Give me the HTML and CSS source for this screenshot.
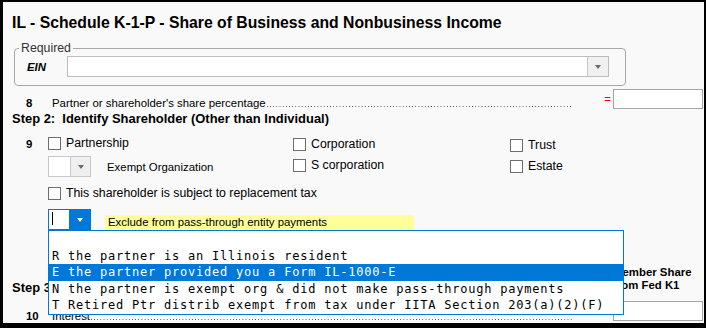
FILE: index.html
```html
<!DOCTYPE html>
<html lang="en">
<head>
<meta charset="utf-8">
<title>IL - Schedule K-1-P</title>
<link rel="stylesheet" href="styles.css">
</head>
<body>
<div class="page">
  <h1 class="title">IL - Schedule K-1-P - Share of Business and Nonbusiness Income</h1>

  <fieldset class="req">
    <legend>Required</legend>
    <div class="ein-row">
      <span class="ein-label">EIN</span>
      <div class="select">
        <span class="select-value"></span>
        <span class="select-btn"><span class="caret"></span></span>
      </div>
    </div>
  </fieldset>

  <div class="line-row row8">
    <span class="num">8</span>
    <span class="leader"><span class="leader-text">Partner or shareholder's share percentage</span><span class="dots"></span></span>
    <span class="eq">=</span>
    <span class="amount"></span>
  </div>

  <h2 class="step">Step 2:&nbsp; Identify Shareholder (Other than Individual)</h2>

  <div class="row9">
    <span class="num num9">9</span>
    <div class="col col1">
      <label class="check"><span class="box"></span><span>Partnership</span></label>
      <div class="combo-row exempt">
        <div class="combo">
          <span class="combo-field"></span>
          <span class="combo-btn"><span class="caret"></span></span>
        </div>
        <span class="combo-label">Exempt Organization</span>
      </div>
    </div>
    <div class="col col2">
      <label class="check"><span class="box"></span><span>Corporation</span></label>
      <label class="check second"><span class="box"></span><span>S corporation</span></label>
    </div>
    <div class="col col3">
      <label class="check"><span class="box"></span><span>Trust</span></label>
      <label class="check second"><span class="box"></span><span>Estate</span></label>
    </div>
  </div>

  <label class="check repl"><span class="box"></span><span>This shareholder is subject to replacement tax</span></label>

  <div class="combo-row active-row">
    <div class="combo active">
      <span class="combo-field"><span class="cursor"></span></span>
      <span class="combo-btn"><span class="caret"></span></span>
      <ul class="menu">
        <li></li>
        <li>R the partner is an Illinois resident</li>
        <li class="sel">E the partner provided you a Form IL-1000-E</li>
        <li>N the partner is exempt org &amp; did not make pass-through payments</li>
        <li>T Retired Ptr distrib exempt from tax under IITA Section 203(a)(2)(F)</li>
      </ul>
    </div>
    <span class="hl">Exclude from pass-through entity payments</span>
  </div>

  <div class="step3-row">
    <h2 class="step step3">Step 3</h2>
    <div class="colhead">Member Share<br>from Fed K1</div>
  </div>

  <div class="line-row row10">
    <span class="num">10</span>
    <span class="leader"><span class="leader-text">Interest</span><span class="dots"></span></span>
    <span class="eq blank"></span>
    <span class="amount"></span>
  </div>
</div>
</body>
</html>
```

FILE: styles.css
```css
* { box-sizing: border-box; }

html, body {
  margin: 0;
  background: #000;
}

body {
  padding: 2px 2px 0 3px;
  font-family: "Liberation Sans", Arial, sans-serif;
  color: #000;
}

.page {
  position: relative;
  width: 701px;
  height: 321px;
  overflow: hidden;
  background: #f9f9f9;
  padding: 11px 1px 0 9px;
}

.title {
  margin: 0;
  font-size: 15.75px;
  line-height: 19px;
  font-weight: bold;
}

/* Required group */
.req {
  margin: 9px 0 0 2px;
  width: 612px;
  min-width: 0;
  padding: 0 16px 8px 4px;
  border: 1px solid #a8a8a8;
  border-radius: 4px;
}

.req legend {
  padding: 0 2px;
  font-size: 12.3px;
  line-height: 15px;
  color: #333;
}

.ein-row {
  display: flex;
  align-items: center;
  height: 21px;
}

.ein-label {
  width: 40px;
  margin-left: 8px;
  font-size: 11.4px;
  line-height: 14px;
  font-weight: bold;
  font-style: italic;
}

.select {
  flex: 1;
  display: flex;
  height: 21px;
  background: #fff;
  border: 1px solid #bdbdbd;
}

.select-value { flex: 1; }

.select-btn {
  width: 21px;
  background: #f0f0f0;
  border-left: 1px solid #c8c8c8;
  display: flex;
  align-items: center;
  justify-content: center;
}

.caret {
  width: 0;
  height: 0;
  border-left: 3.5px solid transparent;
  border-right: 3.5px solid transparent;
  border-top: 4px solid #6a6a6a;
}

/* numbered lines */
.line-row {
  display: flex;
  align-items: flex-start;
  height: 21px;
  padding-left: 14px;
}

.row8 { margin-top: 3px; }

.num {
  width: 26px;
  flex: none;
  font-size: 11.4px;
  line-height: 14px;
  font-weight: bold;
}

.line-row .num,
.line-row .leader { margin-top: 7px; }

.leader {
  width: 521px;
  flex: none;
  display: flex;
  font-size: 11.4px;
  line-height: 14px;
  white-space: nowrap;
}

.dots {
  flex: 1;
  height: 14px;
  margin-left: 1px;
  background-image: linear-gradient(to right, #3c3c3c 1px, transparent 1px);
  background-size: 3.17px 1px;
  background-repeat: repeat-x;
  background-position: 0 10px;
}

.eq {
  margin-left: auto;
  margin-right: 2px;
  margin-top: 3px;
  font-size: 11.4px;
  line-height: 14px;
  color: #ff0000;
}

.amount {
  width: 90px;
  height: 20px;
  flex: none;
  background: #fff;
  border: 1px solid #a5a5a5;
}

/* headings */
.step {
  margin: 1px 0 0;
  font-size: 12.95px;
  line-height: 16px;
  font-weight: bold;
}

/* row 9 */
.row9 {
  display: flex;
  align-items: flex-start;
  margin-top: 9px;
  padding-left: 14px;
}

.num9 {
  width: 22px;
  margin-top: 1px;
}

.col {
  display: flex;
  flex-direction: column;
  align-items: flex-start;
}

.col1 { width: 245px; }
.col2 { width: 217px; margin-top: 1px; }
.col3 { margin-top: 2px; }

.check {
  display: flex;
  align-items: center;
  height: 15px;
  font-size: 12.3px;
  line-height: 15px;
  white-space: nowrap;
}

.check .box {
  width: 13px;
  height: 13px;
  margin-right: 5px;
  background: #fff;
  border: 1px solid #6e6e6e;
  flex: none;
}

.check.second { margin-top: 6px; }

.combo-row {
  display: flex;
  align-items: center;
}

.exempt { margin-top: 5px; }

.combo {
  position: relative;
  display: flex;
  width: 43px;
  height: 21px;
}

.combo-field {
  width: 22px;
  height: 21px;
  background: #fff;
  border: 1px solid #c8c8c8;
  border-right: none;
}

.combo-btn {
  width: 21px;
  height: 21px;
  background: #efefef;
  border: 1px solid #c8c8c8;
  display: flex;
  align-items: center;
  justify-content: center;
}

.combo-label {
  margin-left: 16px;
  font-size: 11.4px;
  line-height: 14px;
}

.repl {
  margin: 9px 0 0 36px;
}

/* active combo with open list */
.active-row {
  margin: 8px 0 0 36px;
  align-items: flex-start;
}

.combo.active .combo-field {
  width: 21px;
  border: 1px solid #0078d7;
  border-right: none;
  padding: 2px 0 0 3px;
}

.cursor {
  display: block;
  width: 1px;
  height: 13px;
  background: #000;
}

.combo.active .combo-btn {
  width: 22px;
  background: #0078d7;
  border-color: #0078d7;
}

.combo.active .caret { border-top-color: #fff; }

.hl {
  width: 309px;
  margin: 6px 0 0 14px;
  padding-left: 3px;
  background: #ffff99;
  font-size: 11.4px;
  line-height: 14px;
  white-space: nowrap;
}

.menu {
  position: absolute;
  left: 0;
  top: 100%;
  z-index: 5;
  width: 576px;
  margin: 0;
  padding: 0;
  list-style: none;
  background: #fff;
  border: 1px solid #0078d7;
  font-family: "DejaVu Sans Mono", "Liberation Mono", monospace;
  font-size: 12px;
  letter-spacing: 0.78px;
  color: #000;
}

.menu li {
  height: 16.6px;
  line-height: 16.6px;
  padding-left: 3px;
  white-space: pre;
}

.menu li.sel {
  background: #0078d7;
  color: #fff;
}

/* step 3 */
.step3-row {
  display: flex;
  align-items: flex-start;
  margin-top: 36px;
}

.step3 { margin-top: 14px; }

.colhead {
  margin-left: auto;
  width: 90px;
  font-size: 11.4px;
  line-height: 12.6px;
  font-weight: bold;
  white-space: nowrap;
}

.row10 { margin-top: 5px; }
.row10 .num, .row10 .leader { margin-top: 8px; }
.eq.blank { width: 0; }
```
